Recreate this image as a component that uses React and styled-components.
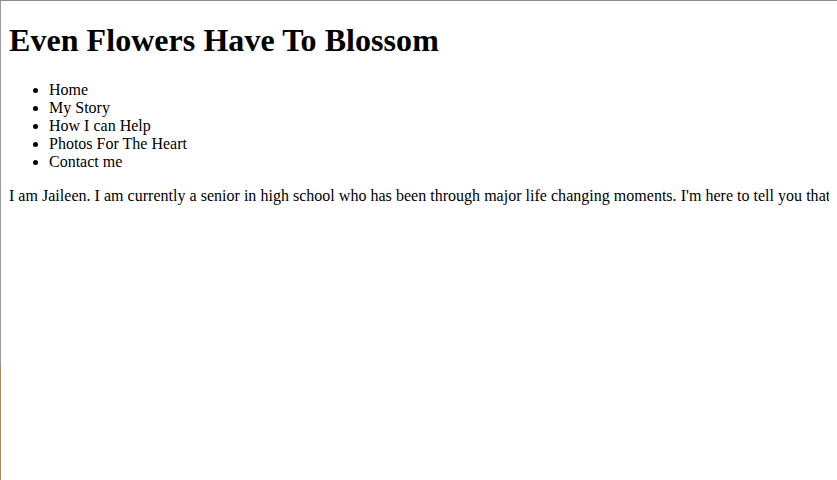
import React from "react";
import styled, { createGlobalStyle } from "styled-components";

const GlobalStyle = createGlobalStyle`
  html {
    margin: 0;
    min-height: 100%;
    border-top: 1px solid #8c8c8c;
    padding-left: 1px;
    box-sizing: border-box;
    overflow: hidden;
    background:
      linear-gradient(to bottom, #9a9a9a 0, #9a9a9a 364px, #a28c60 364px, #a28c60 100%) left top / 1px 100% no-repeat,
      #ffffff;
  }
  body {
    margin: 0 8px 8px 8px;
    font-family: "Liberation Serif", "Times New Roman", serif;
    font-size: 16px;
    color: #000;
    background: transparent;
  }
`;

const Page = styled.div`
  display: block;
`;

const Title = styled.h1`
  font-size: 32px;
  font-weight: bold;
  margin: 21.44px 0;
  letter-spacing: 0.05px;
`;

const NavList = styled.ul`
  list-style: disc;
  margin: 16px 0;
  padding-left: 40px;
`;

const NavItem = styled.li`
  line-height: normal;
`;

const Intro = styled.p`
  margin: 16px 0;
  white-space: nowrap;
  letter-spacing: 0.02px;
`;

const links = ["Home", "My Story", "How I can Help", "Photos For The Heart", "Contact me"];

export default function App() {
  return (
    <Page>
      <GlobalStyle />
      <Title>Even Flowers Have To Blossom</Title>
      <NavList>
        {links.map((l) => (
          <NavItem key={l}>{l}</NavItem>
        ))}
      </NavList>
      <Intro>
        I am Jaileen. I am currently a senior in high school who has been through major life changing moments. I'm here to tell you that you are not alone.
      </Intro>
    </Page>
  );
}
